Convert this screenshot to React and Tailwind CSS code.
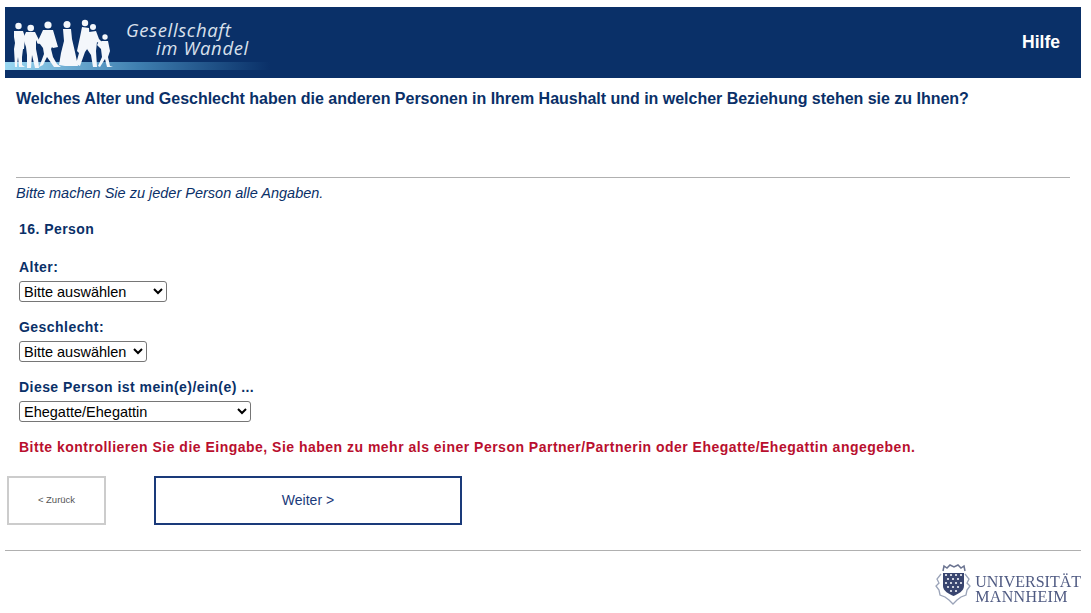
const arial = '[font-family:"Liberation_Sans",Arial,sans-serif]';

function WandelLogo() {
  return (
    <div className="relative h-[71px] w-[265px] shrink-0 overflow-hidden">
      {/* light band under the figures */}
      <div className="absolute left-0 top-[55px] h-[8px] w-[265px] bg-gradient-to-r from-[#9ad8f2] via-[#3f7fb0] to-[#0a3068]" />
      <svg className="absolute left-0 top-0 blur-[0.4px]" width="115" height="71" viewBox="0 0 115 71" fill="#f4f7fb">
        <circle cx="13.5" cy="19" r="3.2" />
        <path d="M9 24L18 24L20 30L19 42L18 42L17 50L17 58L20 60L14 60L13 50L12 58L12 60L10 60L9 42L10 36L9 30Z" />
        <circle cx="25.7" cy="21" r="3.3" />
        <path d="M21 25L30 25L35 35L33 37L31 33L31 42L33 52L34 61L30 61L27 48L26 61L22 61L22 48L21 40L19 34L17 34Z" />
        <circle cx="43" cy="18" r="3.6" />
        <path d="M38 23L48 23L53 40L48 41L47 40L46 42L48 50L52 57L56 60L49 60L42 50L38 58L34 60L36 55L39 47L38 41L35 37L32 36Z" />
        <circle cx="62" cy="17.5" r="3.5" />
        <path d="M58 22L66 22L67 32L70 45L73 59L60 59L54 58L56 46L59 34Z" />
        <circle cx="80" cy="16" r="3.2" />
        <path d="M77 20L84 21L85 38L80 45L75 59L71 57L74 46L72 44L75 30Z" />
        <circle cx="88" cy="20" r="3" />
        <path d="M84 25L91 24L94 32L99 37L98 39L92 35L91 44L92 60L88 60L86 48L82 42L83 32Z" />
        <circle cx="100" cy="30" r="2.7" />
        <path d="M97 34L103 34L105 44L103 50L105 59L108 60L102 60L100 52L95 60L93 59L97 50L96 42L92 38L93 36Z" />
      </svg>
      <div className="absolute left-[121px] top-[14px] [font-family:'Open_Sans',sans-serif] text-[18.500px] italic leading-[18px] tracking-[0.65px] text-[#d9e0ec]">
        <div>Gesellschaft</div>
        <div className="pl-[30px]">im Wandel</div>
      </div>
    </div>
  );
}

function MannheimLogo() {
  const cells = [
    [11, 11], [16, 11], [21, 11], [26, 11],
    [13, 15], [18, 15], [23, 15],
    [11, 19], [16, 19], [21, 19], [26, 19],
    [13, 23], [18, 23], [23, 23],
    [16, 27], [21, 27],
  ];
  return (
    <div className="flex items-start">
      <svg className="blur-[0.4px]" width="38" height="42" viewBox="0 0 38 42" fill="none">
        <path d="M8 7l1-5 3 2 3-3 4 2 4-2 3 3 3-2 1 5" stroke="#6a7390" strokeWidth="1.500" />
        <path d="M6 10L2 15l2 4-3 3 3 4 1 5 5 2 4 3 4 4 4-4 4-3 5-2 1-5 3-4-3-3 2-4-4-5" stroke="#9aa3b8" strokeWidth="1.300" />
        <path d="M8 9h21v13c0 5-6 8-10.500 10C14 30 8 27 8 22z" fill="#39456f" />
        <g fill="#e8eaf1">
          {cells.map(([x, y]) => (
            <rect key={`${x}-${y}`} x={x - 1.1} y={y - 1.1} width="2.200" height="2.200" rx="1" />
          ))}
        </g>
      </svg>
      <div className="ml-[2px] mt-[10px] [font-family:'Liberation_Serif',serif] text-[16px] leading-[15px] text-[#4f5a82] blur-[0.3px]">
        <div>UNIVERSITÄT</div>
        <div className="tracking-[0.35px]">MANNHEIM</div>
      </div>
    </div>
  );
}

function Field({ label, width, value, options }) {
  return (
    <div className="flex flex-col items-start">
      <label className="text-[14px] font-bold leading-[16px] tracking-[0.45px] text-[#0a3068]">{label}</label>
      <select
        defaultValue={value}
        className={`mt-[6px] h-[21px] ${width} rounded-[3px] border border-[#767676] bg-white text-[14.500px] text-black`}
      >
        {options.map((o) => (
          <option key={o}>{o}</option>
        ))}
      </select>
    </div>
  );
}

export default function App() {
  return (
    <div className={`h-[613px] w-[1091px] overflow-hidden bg-white px-[5px] pt-[7px] ${arial}`}>
      <div className="w-[1076px]">
        <header className="flex h-[71px] items-center justify-between bg-[#0a3068]">
          <WandelLogo />
          <a className="mr-[21px] text-[17.500px] font-bold text-white">Hilfe</a>
        </header>

        <div className="px-[11px]">
          <h1 className="mt-[12px] text-[16px] font-bold leading-[18px] tracking-[-0.017px] text-[#0a3068]">
            Welches Alter und Geschlecht haben die anderen Personen in Ihrem Haushalt und in welcher Beziehung stehen sie zu Ihnen?
          </h1>
          <div className="mt-[69px] h-px bg-[#b0b0b0]" />
          <p className="mt-[7px] text-[14.500px] italic leading-[16px] text-[#0a3068]">
            Bitte machen Sie zu jeder Person alle Angaben.
          </p>

          <div className="flex flex-col pl-[3px]">
            <h2 className="mt-[20px] text-[14px] font-bold leading-[16px] tracking-[0.45px] text-[#0a3068]">16. Person</h2>
            <div className="mt-[22px] flex flex-col gap-[17px]">
              <Field label="Alter:" width="w-[148px]" value="Bitte auswählen" options={['Bitte auswählen']} />
              <Field label="Geschlecht:" width="w-[128px]" value="Bitte auswählen" options={['Bitte auswählen']} />
              <Field
                label="Diese Person ist mein(e)/ein(e) ..."
                width="w-[232px]"
                value="Ehegatte/Ehegattin"
                options={['Ehegatte/Ehegattin']}
              />
            </div>
            <p className="mt-[17px] text-[14px] font-bold leading-[16px] tracking-[0.49px] text-[#b90f2e]">
              Bitte kontrollieren Sie die Eingabe, Sie haben zu mehr als einer Person Partner/Partnerin oder Ehegatte/Ehegattin angegeben.
            </p>
          </div>
        </div>

        <div className="mt-[21px] flex pl-[2px]">
          <button className="h-[49px] w-[99px] border-[2px] border-[#cccccc] bg-white text-[9.500px] text-[#555555]">&lt; Zurück</button>
          <button className="ml-[48px] h-[49px] w-[308px] border-[2px] border-[#1a3a7a] bg-white text-[14px] text-[#1a3a7a]">Weiter &gt;</button>
        </div>

        <div className="mt-[25px] h-px bg-[#b0b0b0]" />
        <div className="mt-[13px] flex justify-end">
          <MannheimLogo />
        </div>
      </div>
    </div>
  );
}
